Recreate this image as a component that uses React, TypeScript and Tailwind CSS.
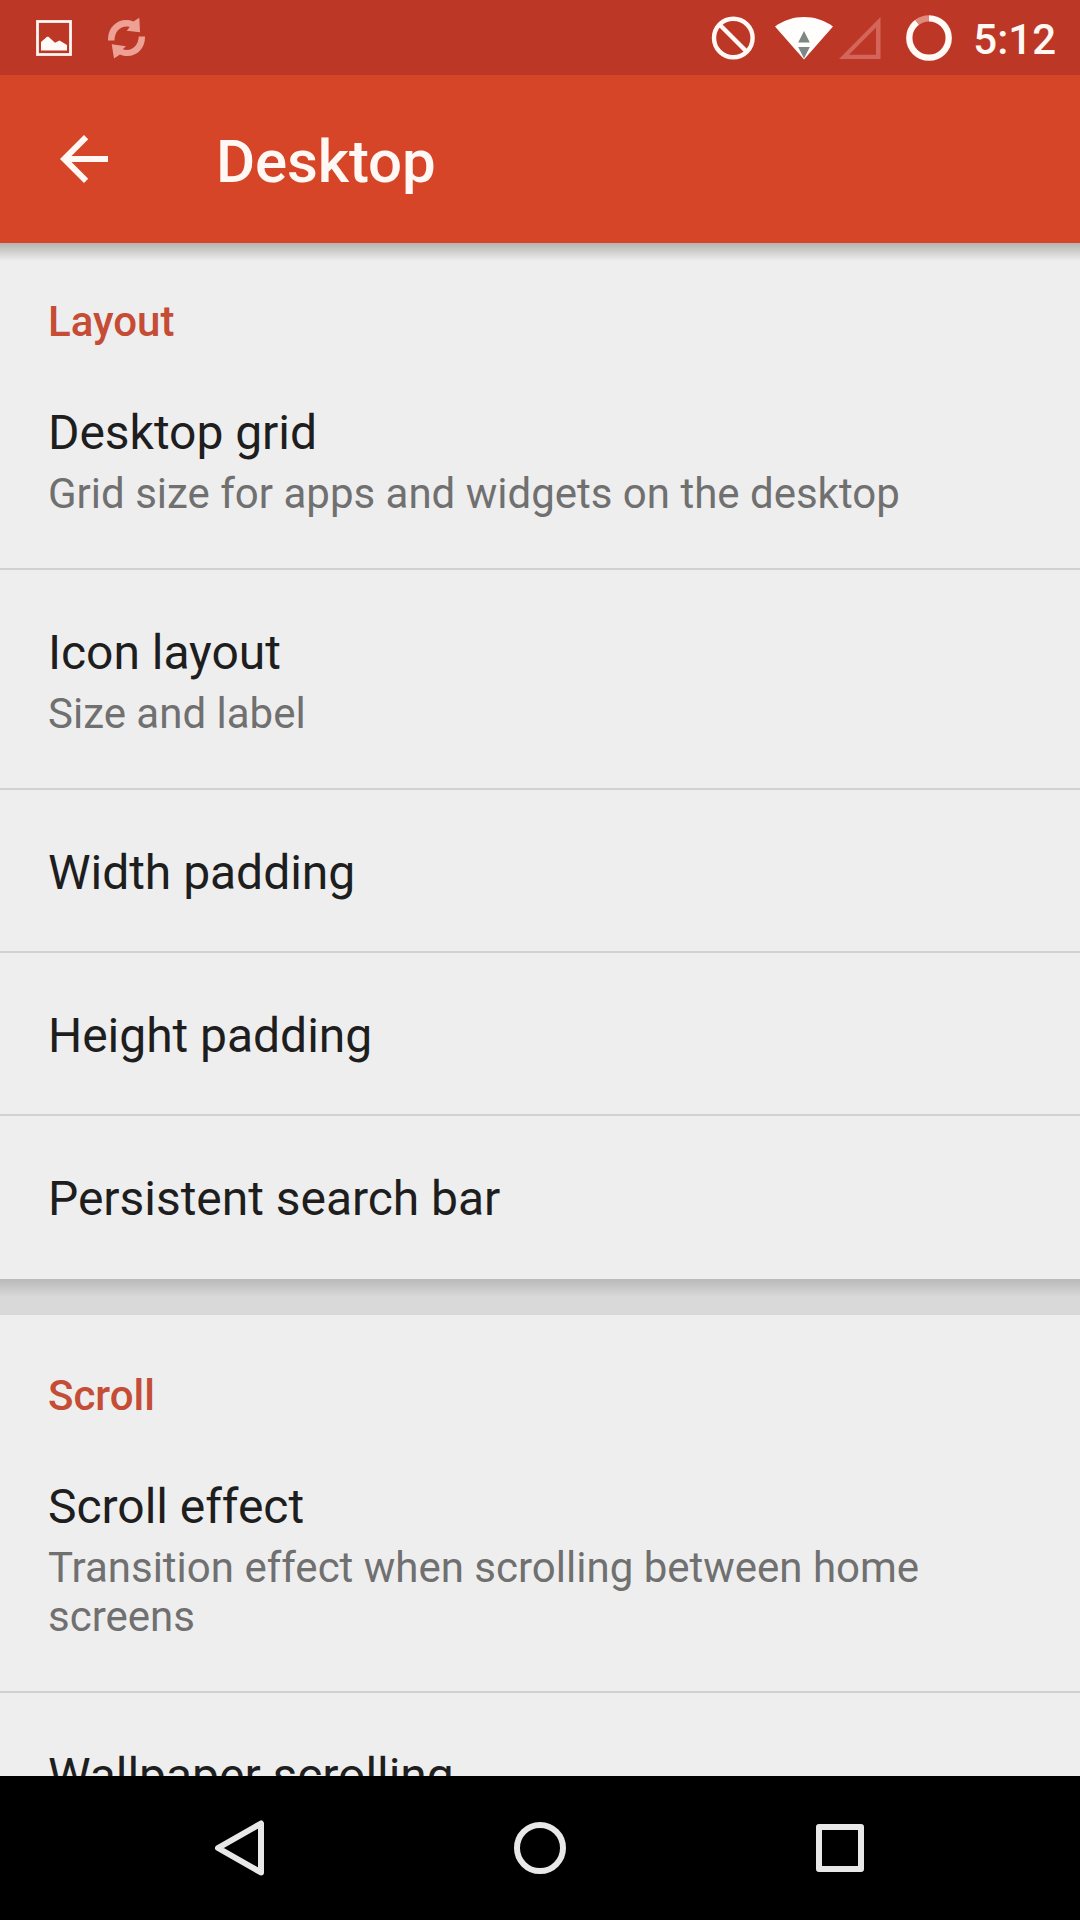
import React from "react";

function StatusBar() {
  return (
    <div className="flex h-[75px] shrink-0 items-center bg-[#bd3727] pl-9 pr-6">
      <svg className="h-9 w-9" viewBox="0 0 36 36">
        <rect x="1.5" y="1.5" width="33" height="33" fill="none" stroke="#fdf6f2" strokeWidth="2.8" />
        <path d="M5 30.5v-8.500l6-5.200h1.500l6.500 6 4.500-2.200 7.500 4.500v5.400z" fill="#fffaf6" />
      </svg>
      <svg className="ml-9 h-[42px] w-[38px]" viewBox="0 0 38 42" fill="#eda195">
        <path d="M0 23.500C-0.500 8.500 12.500-0.500 25.500 4.500L31.300 0.800 32 15.200 18.700 13.700l3-3.700C13.500 8 6.500 14 6.500 23.500z" />
        <path d="M37 19.500C37.500 33.500 25 43 12 37.500L6 41.500 3.700 27.300 18 29.200l-3.300 3C23 35 30.500 29 30.700 19.500z" />
      </svg>
      <div className="flex-1" />
      <svg className="h-11 w-11" viewBox="0 0 44 44" fill="none" stroke="#fff8f4" strokeWidth="4.400">
        <circle cx="22.300" cy="22" r="19.300" />
        <path d="M8.500 8.500l27 27" />
      </svg>
      <svg className="ml-[19px] h-11 w-[60px]" viewBox="0 0 60 44">
        <path d="M1 10.500C18-2.300 42-2.300 59 10.500L30 43.500z" fill="#fffefc" />
        <path d="M30 15l5.800 11.500H24.200zM24.200 31h11.600L30 42.500z" fill="#7d8783" />
      </svg>
      <svg className="ml-[4px] h-11 w-11" viewBox="0 0 44 44">
        <path d="M42.500 1v42H1zM38 11.500L11 38.800H38z" fill="#d5655a" fillRule="evenodd" />
      </svg>
      <svg className="ml-6 h-[46px] w-[46px]" viewBox="0 0 46 46" fill="none" strokeWidth="6.300">
        <circle cx="23" cy="23" r="19.700" stroke="#fffaf6" />
        <path d="M11.100 7.300A19.700 19.700 0 0 1 23 3.300" stroke="#bd3727" strokeWidth="7.500" />
        <path d="M11.100 7.300A19.700 19.700 0 0 1 23 3.300" stroke="#e08b7d" />
      </svg>
      <span className="ml-[21px] mt-1 text-[42px] font-medium leading-[50px] text-[#fff8f4]">5:12</span>
    </div>
  );
}

function AppBar() {
  return (
    <header className="relative z-10 flex h-[168px] shrink-0 items-center bg-[#d64527] pl-12">
      <svg className="h-[72px] w-[72px]" viewBox="0 0 24 24" fill="#fff8f4">
        <path d="M20 11H7.830l5.590-5.590L12 4l-8 8 8 8 1.410-1.410L7.830 13H20v-2z" />
      </svg>
      <h1 className="ml-24 mt-1.5 text-[60px] font-medium leading-[70px] tracking-[-0.15px] text-[#fff8f4]">Desktop</h1>
      <div className="absolute inset-x-0 top-full h-[18px] bg-linear-to-b from-[#b4b4b0] to-[#eeeeee]" />
    </header>
  );
}

function SectionTitle({ children }: { children: React.ReactNode }) {
  return <h2 className="h-[109px] pl-12 pt-14 text-[42px] font-medium leading-[50px] text-[#c54c35]">{children}</h2>;
}

function Row({ title, summary, last }: { title: string; summary?: string; last?: boolean }) {
  return (
    <div className={last ? "pb-[52px] pl-12 pr-24 pt-[55px]" : "border-b-2 border-[#d1d1d1] pb-[50px] pl-12 pr-24 pt-[55px]"}>
      <div className="text-[48px] leading-[56px] tracking-[-0.04px] text-[#1e1e1e]">{title}</div>
      {summary && <div className="pt-2 text-[42px] leading-[49px] text-[#707070]">{summary}</div>}
    </div>
  );
}

function NavBar() {
  return (
    <nav className="flex h-36 shrink-0 items-center justify-between bg-black px-[204px]">
      <svg className="h-[72px] w-[72px]" viewBox="0 0 72 72" fill="none" stroke="#e8e8e8" strokeWidth="6" strokeLinejoin="round">
        <path d="M57 11.500v49L14 36z" />
      </svg>
      <svg className="h-[72px] w-[72px]" viewBox="0 0 72 72" fill="none" stroke="#e8e8e8" strokeWidth="6">
        <circle cx="36" cy="36" r="23" />
      </svg>
      <svg className="h-[72px] w-[72px]" viewBox="0 0 72 72" fill="none" stroke="#e8e8e8" strokeWidth="6" strokeLinejoin="round">
        <rect x="15" y="15" width="42" height="42" />
      </svg>
    </nav>
  );
}

export default function App() {
  return (
    <div className="flex h-[1920px] w-[1080px] flex-col overflow-hidden bg-[#d9d9d9] font-['Roboto',sans-serif]">
      <StatusBar />
      <AppBar />
      <main className="min-h-0 flex-1 overflow-hidden">
        <section className="-mt-0.5 bg-[#eeeeee]">
          <SectionTitle>Layout</SectionTitle>
          <Row title="Desktop grid" summary="Grid size for apps and widgets on the desktop" />
          <Row title="Icon layout" summary="Size and label" />
          <Row title="Width padding" />
          <Row title="Height padding" />
          <Row title="Persistent search bar" last />
        </section>
        <div className="h-9 bg-linear-to-b from-[#b9b9b9] to-[#d9d9d9] to-50%" />
        <section className="bg-[#eeeeee]">
          <SectionTitle>Scroll</SectionTitle>
          <Row title="Scroll effect" summary="Transition effect when scrolling between home screens" />
          <Row title="Wallpaper scrolling" />
        </section>
      </main>
      <NavBar />
    </div>
  );
}
